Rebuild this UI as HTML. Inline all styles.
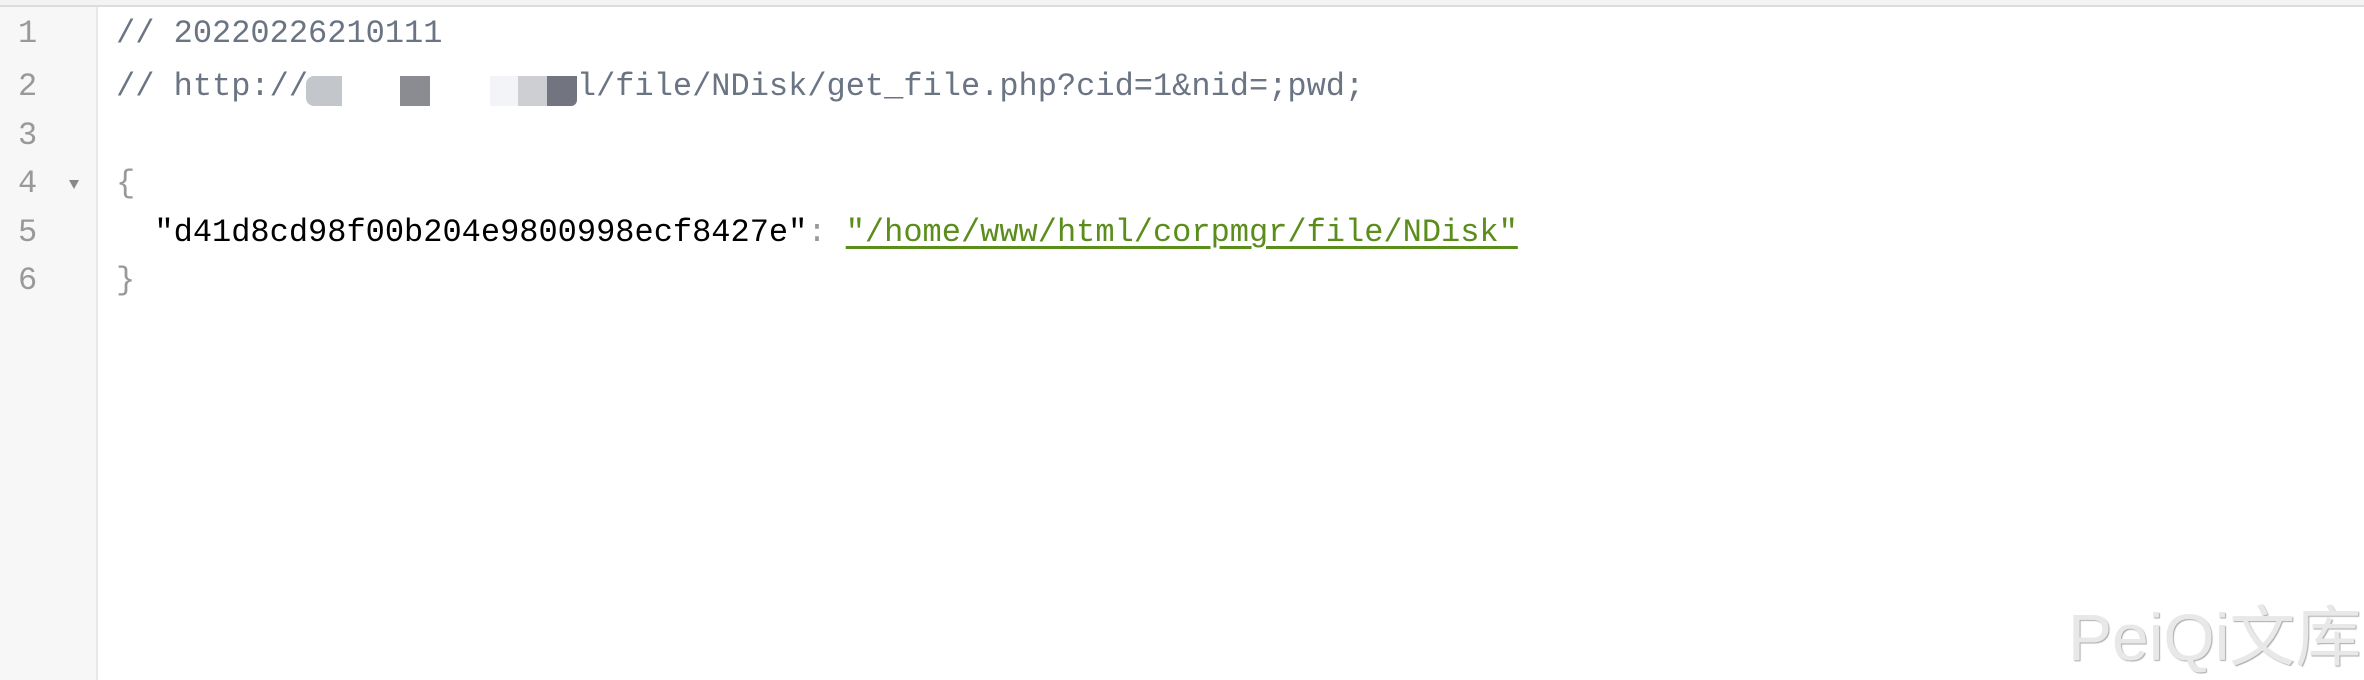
<!DOCTYPE html>
<html><head><meta charset="utf-8"><style>
body{margin:0;width:2364px;height:680px;background:#fff;position:relative;overflow:hidden;font-family:"Liberation Mono",monospace;}
.top{position:absolute;left:0;top:0;width:2364px;height:5px;background:#f3f3f3;border-bottom:2px solid #dcdcdc;}
.gut{position:absolute;left:0;top:7px;width:96px;height:673px;background:#f7f7f7;border-right:2px solid #e8e8e8;}
.ln{position:absolute;left:18px;font-size:32px;color:#999;line-height:48px;}
.code{position:absolute;left:116px;font-size:32px;line-height:48px;white-space:pre;}
.c{color:#6a7483}
.k{color:#000}
.s{color:#5a8d1a;text-decoration:underline;text-decoration-thickness:3px;text-underline-offset:5px}
.p{color:#999}
.b{position:absolute}
.wm{position:absolute;left:2068px;top:584px;font-family:"Liberation Sans","Noto Sans CJK SC",sans-serif;font-size:66px;color:#e8e8e8;text-shadow:1px 1px 1px #aaa;}
</style></head><body>
<div class="top"></div>
<div class="gut"></div>
<div class="ln" style="top:10px">1</div>
<div class="ln" style="top:63px">2</div>
<div class="ln" style="top:112px">3</div>
<div class="ln" style="top:160px">4</div>
<div class="ln" style="top:209px">5</div>
<div class="ln" style="top:257px">6</div>
<div style="position:absolute;left:69px;top:180px;width:0;height:0;border-left:5px solid transparent;border-right:5px solid transparent;border-top:9px solid #888"></div>
<div class="code c" style="top:10px">// 20220226210111</div>
<div class="code c" style="top:63px">// http://              l/file/NDisk/get_file.php?cid=1&amp;nid=;pwd;</div>
<div class="b" style="left:306px;top:76px;width:36px;height:30px;background:#c3c6cb;border-radius:8px 0 0 8px"></div>
<div class="b" style="left:400px;top:76px;width:30px;height:30px;background:#8b8b92"></div>
<div class="b" style="left:490px;top:76px;width:28px;height:30px;background:#f2f4f8"></div>
<div class="b" style="left:518px;top:76px;width:29px;height:30px;background:#cdcfd3"></div>
<div class="b" style="left:547px;top:76px;width:30px;height:30px;background:#727480;border-radius:0 0 6px 0"></div>
<div class="code p" style="top:160px">{</div>
<div class="code" style="top:209px"><span class="k">  "d41d8cd98f00b204e9800998ecf8427e"</span><span class="p">: </span><span class="s">"/home/www/html/corpmgr/file/NDisk"</span></div>
<div class="code p" style="top:257px">}</div>
<div class="wm">PeiQi文库</div>
</body></html>
